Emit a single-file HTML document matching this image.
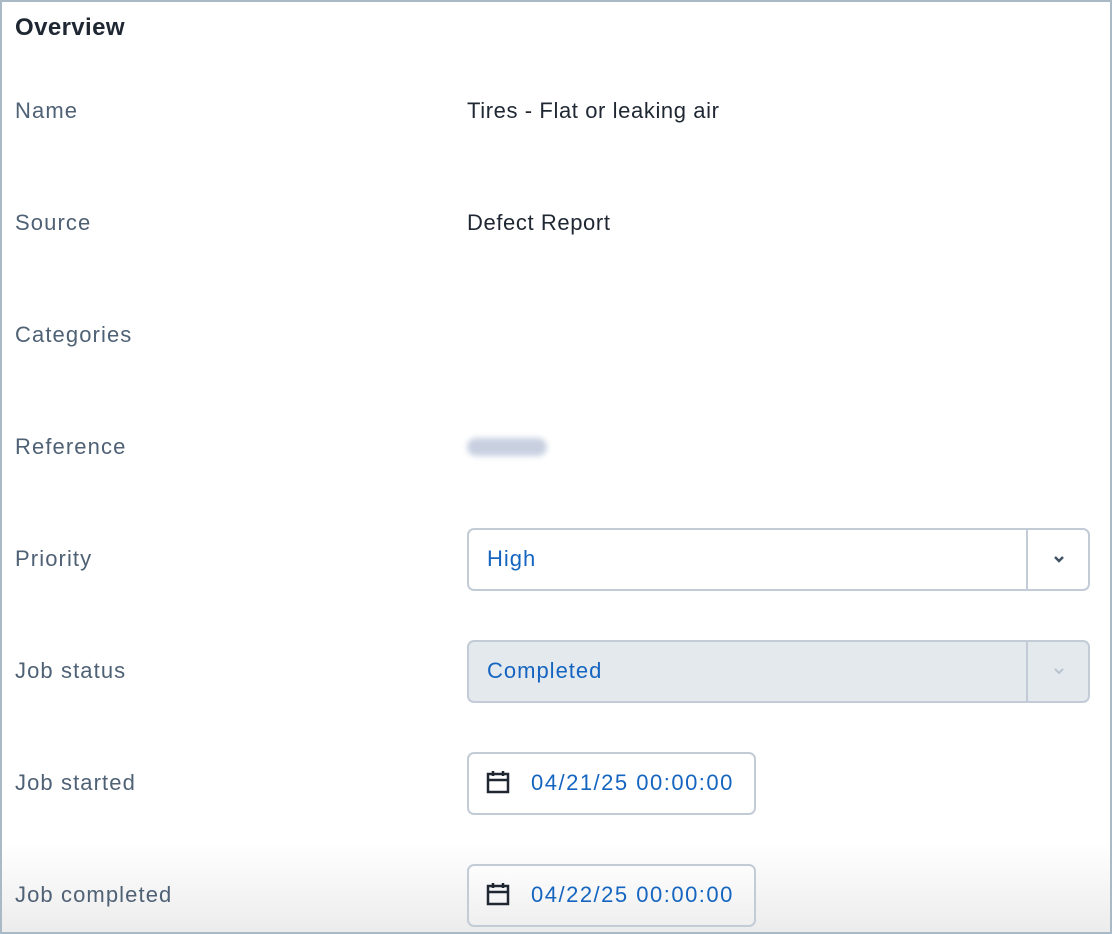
<!DOCTYPE html>
<html><head><style>
body{margin:0;width:1112px;height:934px;overflow:hidden;font-family:"Liberation Sans",sans-serif;background:#fff;}
.frame{position:absolute;left:0;top:0;width:1108px;height:930px;border:2px solid #a9bac6;background:linear-gradient(to bottom,#fff 0,#fff 840px,#ececec 930px);}
.t{position:absolute;left:13px;top:12px;font-size:24px;font-weight:bold;color:#1f2733;letter-spacing:0.4px;}
.l{position:absolute;left:13px;font-size:22px;color:#4f6175;line-height:24px;letter-spacing:1.1px;}
.v{position:absolute;left:465px;font-size:22px;color:#1f2733;line-height:24px;letter-spacing:0.6px;}
.sel{position:absolute;left:465px;width:619px;height:59px;border:2px solid #c3ccd6;border-radius:7px;}
.sel span{position:absolute;left:18px;top:16px;font-size:22px;color:#1565c0;letter-spacing:1px;}
.sel .d{position:absolute;right:60px;top:0;bottom:0;border-left:2px solid #c3ccd6;}
.sel svg{position:absolute;right:22px;top:24px;}
.dt{position:absolute;left:465px;width:285px;height:59px;border:2px solid #c3ccd6;border-radius:7px;background:#fff;}
.dt span{position:absolute;left:62px;top:16px;font-size:22px;color:#1565c0;letter-spacing:1.5px;}
.dt svg{position:absolute;left:16px;top:15px;}
</style></head><body>
<div class="frame">
<div class="t">Overview</div>
<div class="l" style="top:97px">Name</div><div class="v" style="top:97px">Tires - Flat or leaking air</div>
<div class="l" style="top:209px">Source</div><div class="v" style="top:209px">Defect Report</div>
<div class="l" style="top:321px">Categories</div>
<div class="l" style="top:433px">Reference</div>
<div style="position:absolute;left:465px;top:436px;width:80px;height:18px;background:#c8d0e0;border-radius:9px;filter:blur(3px)"></div>
<div class="l" style="top:545px">Priority</div>
<div class="sel" style="top:526px;background:#fff"><span>High</span><div class="d"></div><svg width="14" height="10" viewBox="0 0 14 10"><path d="M3 3l4 4 4-4" stroke="#3f5064" stroke-width="2.4" fill="none"/></svg></div>
<div class="l" style="top:657px">Job status</div>
<div class="sel" style="top:638px;background:#e4e9ee"><span>Completed</span><div class="d"></div><svg width="14" height="10" viewBox="0 0 14 10"><path d="M3 3l4 4 4-4" stroke="#b9c4cf" stroke-width="2" fill="none"/></svg></div>
<div class="l" style="top:769px">Job started</div>
<div class="dt" style="top:750px"><svg width="26" height="26" viewBox="0 0 26 26"><rect x="3" y="5" width="20" height="18" fill="none" stroke="#1f2733" stroke-width="2.5"/><path d="M3 11h20M8 2v5M18 2v5" stroke="#1f2733" stroke-width="2.5"/></svg><span>04/21/25 00:00:00</span></div>
<div class="l" style="top:881px">Job completed</div>
<div class="dt" style="top:862px;background:linear-gradient(#fdfdfd,#efefef)"><svg width="26" height="26" viewBox="0 0 26 26"><rect x="3" y="5" width="20" height="18" fill="none" stroke="#1f2733" stroke-width="2.5"/><path d="M3 11h20M8 2v5M18 2v5" stroke="#1f2733" stroke-width="2.5"/></svg><span>04/22/25 00:00:00</span></div>
</div>
</body></html>
